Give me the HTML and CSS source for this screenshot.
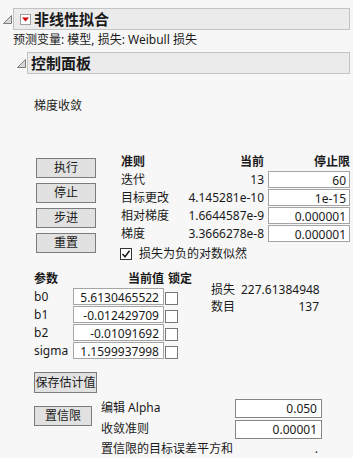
FILE: index.html
```html
<!DOCTYPE html>
<html>
<head>
    <title>非线性拟合</title>
    <meta charset="utf-8">
    <link rel="stylesheet" href="styles.css">
</head>
<body>
    <div class="outline top">
        <svg class="tri" width="9" height="9" viewBox="0 0 9 9"><polygon points="8.5,0.5 8.5,8.5 0.5,8.5" fill="#d8d8d8" stroke="#7a7a7a" stroke-width="1"/></svg>
        <div class="bar">
            <span class="menu-btn"><svg width="9" height="9" viewBox="0 0 9 9"><polygon points="1,2.5 8,2.5 4.5,6.5" fill="#d40000"/></svg></span>
            <span class="title">非线性拟合</span>
        </div>
    </div>
    <div class="subtitle">预测变量: 模型, 损失: Weibull 损失</div>

    <div class="outline second">
        <svg class="tri" width="9" height="9" viewBox="0 0 9 9"><polygon points="8.5,0.5 8.5,8.5 0.5,8.5" fill="#d8d8d8" stroke="#7a7a7a" stroke-width="1"/></svg>
        <div class="bar">
            <span class="title">控制面板</span>
        </div>
    </div>

    <div class="panel">
        <div class="status">梯度收敛</div>

        <div class="run">
            <div class="buttons">
                <div class="button">执行</div>
                <div class="button">停止</div>
                <div class="button">步进</div>
                <div class="button">重置</div>
            </div>
            <div class="crit-side">
                <div class="crit">
                    <div class="head">准则</div>
                    <div class="head num">当前</div>
                    <div class="head num">停止限</div>

                    <div>迭代</div>
                    <div class="num">13</div>
                    <div class="field">60</div>

                    <div>目标更改</div>
                    <div class="num">4.145281e-10</div>
                    <div class="field">1e-15</div>

                    <div>相对梯度</div>
                    <div class="num">1.6644587e-9</div>
                    <div class="field">0.000001</div>

                    <div>梯度</div>
                    <div class="num">3.3666278e-8</div>
                    <div class="field">0.000001</div>
                </div>
                <div class="check-row">
                    <span class="box checked"><svg width="10" height="10" viewBox="0 0 10 10"><polyline points="1.5,5 4,7.8 8.5,1.8" fill="none" stroke="#222" stroke-width="1.6"/></svg></span>
                    <span>损失为负的对数似然</span>
                </div>
            </div>
        </div>

        <div class="params-row">
            <div class="params">
                <div class="head">参数</div>
                <div class="head num">当前值</div>
                <div class="head lock">锁定</div>

                <div>b0</div>
                <div class="field">5.6130465522</div>
                <div class="lock"><span class="box"></span></div>

                <div>b1</div>
                <div class="field">-0.012429709</div>
                <div class="lock"><span class="box"></span></div>

                <div>b2</div>
                <div class="field">-0.01091692</div>
                <div class="lock"><span class="box"></span></div>

                <div>sigma</div>
                <div class="field">1.1599937998</div>
                <div class="lock"><span class="box"></span></div>
            </div>
            <div class="stats">
                <div>损失</div>
                <div class="num">227.61384948</div>
                <div>数目</div>
                <div class="num">137</div>
            </div>
        </div>

        <div class="button save">保存估计值</div>

        <div class="conf-row">
            <div class="button conf">置信限</div>
            <div class="conf-grid">
                <div>编辑 Alpha</div>
                <div class="field">0.050</div>
                <div>收敛准则</div>
                <div class="field">0.00001</div>
                <div>置信限的目标误差平方和</div>
                <div class="num">.</div>
            </div>
        </div>
    </div>
</body>
</html>
```

FILE: styles.css
```css
* {
    box-sizing: border-box;
    margin: 0px;
    padding: 0px;
}

body {
    background-color: #f7f7f7;
    color: #1a1a1a;
    font-family: "Noto Sans", "Noto Sans CJK SC", sans-serif;
    font-size: 12px;
    line-height: 16px;
    padding-top: 8px;
}

.outline {
    display: flex;
    align-items: center;
    height: 22px;
    margin-right: 3px;
}

.tri {
    flex: none;
    margin-top: 1px;
}

.top .tri {
    margin-left: 3px;
    margin-right: 1px;
}

.second {
    margin-top: 4px;
}

.second .tri {
    margin-left: 17px;
    margin-right: 1px;
}

.bar {
    flex: 1;
    height: 22px;
    display: flex;
    align-items: center;
    background-color: #ebebeb;
    border: 1px solid #c3c3c3;
}

.menu-btn {
    width: 11px;
    height: 11px;
    margin-left: 6px;
    border: 1px solid #a0a0a0;
    background-color: #ffffff;
    display: flex;
    align-items: center;
    justify-content: center;
}

.title {
    font-size: 15px;
    font-weight: bold;
    margin-left: 3px;
    line-height: 20px;
}

.subtitle {
    margin-top: 2px;
    margin-left: 13px;
}

.panel {
    padding-left: 34px;
}

.status {
    margin-top: 24px;
}

.run {
    display: flex;
    margin-top: 39px;
}

.buttons {
    display: flex;
    flex-direction: column;
    gap: 5px;
    padding-top: 5px;
    margin-left: 2px;
}

.button {
    background-color: #e1e1e1;
    border: 1px solid #7c7c7c;
    height: 20px;
    width: 60px;
    display: flex;
    align-items: center;
    justify-content: center;
    line-height: 16px;
}

.crit-side {
    margin-left: 24px;
}

.crit {
    display: grid;
    grid-template-columns: 59px 80px 82px;
    grid-auto-rows: 18px;
    column-gap: 4px;
    margin-left: 1px;
}

.crit > div {
    line-height: 17px;
}

.head {
    font-weight: bold;
    white-space: nowrap;
}

.num {
    text-align: right;
}

.field {
    background-color: #ffffff;
    border: 1px solid #a5a5a5;
    height: 17px;
    text-align: right;
    padding-right: 3px;
    line-height: 15px;
}

.check-row {
    display: flex;
    align-items: center;
    gap: 7px;
    margin-top: 5px;
    height: 12px;
}

.box {
    width: 13px;
    height: 13px;
    border: 1px solid #777777;
    background-color: #ffffff;
    display: inline-flex;
    align-items: center;
    justify-content: center;
}

.box.checked {
    width: 12px;
    height: 12px;
    border-color: #333333;
}

.params-row {
    display: flex;
    margin-top: 10px;
}

.params {
    display: grid;
    grid-template-columns: 38px 91px 26px;
    grid-auto-rows: 18px;
    column-gap: 1px;
}

.params > div {
    line-height: 17px;
}

.params .field {
    padding-right: 4px;
}

.lock .box {
    margin-top: 4px;
}

.head.lock {
    margin-left: 3px;
}

.stats {
    display: grid;
    grid-template-columns: 30px 78px;
    grid-auto-rows: 17px;
    margin-left: 20px;
    padding-top: 11px;
    line-height: 17px;
}

.save {
    margin-top: 12px;
    width: 63px;
    height: 21px;
}

.conf-row {
    display: flex;
    margin-top: 6px;
}

.conf {
    width: 58px;
    margin-top: 7px;
}

.conf-grid {
    display: grid;
    grid-template-columns: 134px 87px;
    grid-template-rows: 21px 20px 16px;
    margin-left: 9px;
    align-items: start;
}

.conf-grid > div {
    line-height: 17px;
}

.conf-grid .field {
    height: 19px;
    border-color: #858585;
    padding-right: 4px;
}

.conf-grid .num {
    padding-right: 4px;
}
```
